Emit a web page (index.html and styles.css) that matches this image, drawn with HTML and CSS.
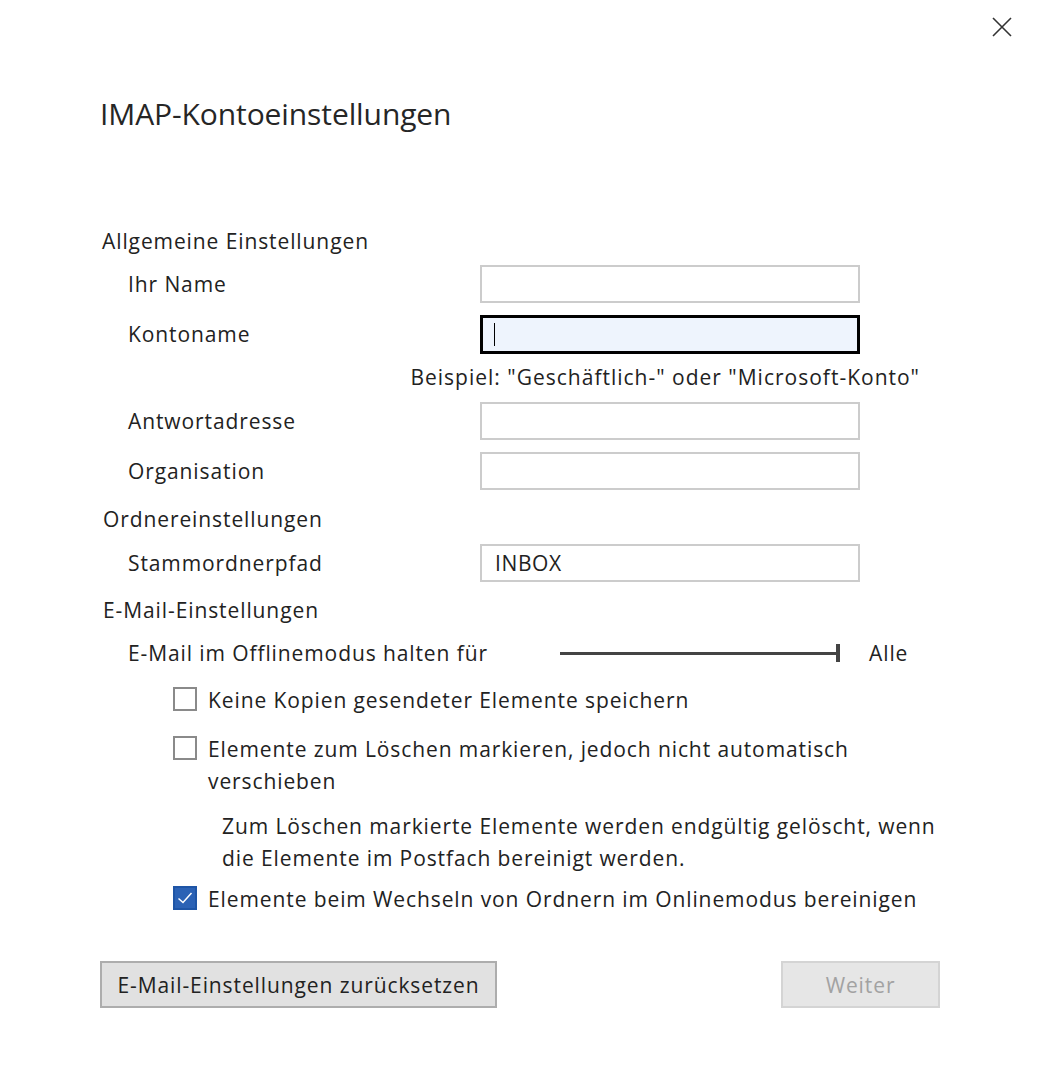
FILE: index.html
```html
<!DOCTYPE html>
<html lang="de">
<head>
<meta charset="utf-8">
<title>IMAP-Kontoeinstellungen</title>
<link rel="stylesheet" href="styles.css">
</head>
<body>
<div class="dialog">
  <button class="close" aria-label="Schließen">
    <svg width="20" height="20" viewBox="0 0 20 20"><path d="M1 1 L19 19 M19 1 L1 19" stroke="#333" stroke-width="1.6" fill="none"/></svg>
  </button>
  <h1 class="title">IMAP-Kontoeinstellungen</h1>

  <div class="form">
    <div class="section">Allgemeine Einstellungen</div>
    <div class="row r1"><span class="label">Ihr Name</span><div class="input"></div></div>
    <div class="row r2"><span class="label">Kontoname</span><div class="input focus"><span class="caret"></span></div></div>
    <div class="hint">Beispiel: "Geschäftlich-" oder "Microsoft-Konto"</div>
    <div class="row r3"><span class="label">Antwortadresse</span><div class="input"></div></div>
    <div class="row r4"><span class="label">Organisation</span><div class="input"></div></div>

    <div class="section s2">Ordnereinstellungen</div>
    <div class="row r5"><span class="label">Stammordnerpfad</span><div class="input value">INBOX</div></div>

    <div class="section s3">E-Mail-Einstellungen</div>
    <div class="offline">
      <span class="label">E-Mail im Offlinemodus halten für</span>
      <div class="slider"><span class="track"></span><span class="thumb"></span></div>
      <span class="slider-value">Alle</span>
    </div>

    <div class="check c1"><span class="box"></span><span class="ctext">Keine Kopien gesendeter Elemente speichern</span></div>
    <div class="check c2"><span class="box"></span><span class="ctext">Elemente zum Löschen markieren, jedoch nicht automatisch<br>verschieben</span></div>
    <div class="note">Zum Löschen markierte Elemente werden endgültig gelöscht, wenn<br>die Elemente im Postfach bereinigt werden.</div>
    <div class="check c3"><span class="box checked"><svg width="20" height="20" viewBox="0 0 20 20"><path d="M3.5 10.5 L8 14.5 L16.5 5" stroke="#fff" stroke-width="1.5" fill="none"/></svg></span><span class="ctext">Elemente beim Wechseln von Ordnern im Onlinemodus bereinigen</span></div>
  </div>

  <div class="buttons">
    <button class="btn">E-Mail-Einstellungen zurücksetzen</button>
    <button class="btn disabled">Weiter</button>
  </div>
</div>
</body>
</html>
```

FILE: styles.css
```css
html, body {
  margin: 0;
  padding: 0;
  background: #fff;
}
body {
  font-family: "Open Sans", "Noto Sans", sans-serif;
  font-size: 21px;
  letter-spacing: 0.9px;
  color: #222;
}
.dialog {
  position: relative;
  width: 1042px;
  height: 1082px;
  box-sizing: border-box;
  padding: 0 80px 0 100px;
}
.close {
  position: absolute;
  top: 17px;
  right: 30px;
  width: 20px;
  height: 20px;
  padding: 0;
  border: 0;
  background: none;
  display: block;
}
.close svg { display: block; }
.title {
  margin: 0;
  padding-top: 96px;
  font-size: 30px;
  font-weight: 400;
  letter-spacing: -0.1px;
  line-height: 36px;
  color: #262626;
  height: 36px;
}
.form {
  display: flex;
  flex-direction: column;
  line-height: 32px;
  margin-top: 93px;
}
.section {
  padding-left: 2px;
  height: 32px;
  white-space: nowrap;
}
.row {
  display: flex;
  align-items: center;
  height: 38px;
  padding-left: 28px;
}
.row .label {
  width: 352px;
}
.input {
  width: 376px;
  height: 34px;
  border: 2px solid #cccccc;
  background: #fff;
  line-height: 34px;
}
.input.focus {
  width: 374px;
  height: 33px;
  border: 3px solid #000;
  background: #eef4fd;
  display: flex;
  align-items: center;
}
.caret {
  display: block;
  width: 1px;
  height: 23px;
  background: #000;
  margin-left: 11px;
}
.input.value {
  padding-left: 13px;
  width: 363px;
  color: #222;
  letter-spacing: 0.6px;
}
.r1 { margin-top: 8px; }
.r2 { margin-top: 12px; }
.hint {
  margin-top: 8px;
  height: 32px;
  text-align: right;
  padding-right: 42px;
  white-space: nowrap;
  letter-spacing: 1px;
}
.r3 { margin-top: 9px; }
.r4 { margin-top: 12px; }
.s2 { margin-top: 13px; padding-left: 3px; }
.r5 { margin-top: 9px; }
.s3 { margin-top: 12px; padding-left: 3px; }
.offline {
  margin-top: 11px;
  display: flex;
  align-items: center;
  padding-left: 28px;
  height: 32px;
  white-space: nowrap;
}
.offline .label { width: 432px; }
.slider {
  position: relative;
  width: 280px;
  height: 20px;
  display: flex;
  align-items: center;
}
.track {
  display: block;
  width: 278px;
  height: 3px;
  background: #444;
}
.thumb {
  display: block;
  width: 4px;
  height: 18px;
  background: #444;
  margin-left: -2px;
}
.slider-value {
  margin-left: 29px;
}
.check {
  display: flex;
  align-items: flex-start;
  padding-left: 73px;
}
.box {
  flex: none;
  width: 20px;
  height: 20px;
  border: 2px solid #8a8a8a;
  margin-top: 3px;
  margin-right: 11px;
  box-sizing: content-box;
}
.box.checked {
  background: #2b62b5;
  border-color: #1e55a6;
  display: flex;
  align-items: center;
  justify-content: center;
}
.box svg { display: block; }
.ctext { flex: 1; white-space: nowrap; }
.c1 { margin-top: 15px; }
.c2 { margin-top: 17px; }
.note {
  margin-top: 13px;
  padding-left: 122px;
  white-space: nowrap;
}
.c3 { margin-top: 9px; }
.buttons {
  margin-top: 46px;
  margin-right: 22px;
  display: flex;
  justify-content: space-between;
}
.btn {
  font-family: inherit;
  font-size: 21px;
  letter-spacing: 0.9px;
  height: 47px;
  border: 2px solid #adadad;
  background: #e1e1e1;
  color: #222;
  padding: 0;
  margin: 0;
  width: 397px;
}
.btn.disabled {
  width: 159px;
  border-color: #d4d4d4;
  background: #e6e6e6;
  color: #a2a2a2;
}
```
